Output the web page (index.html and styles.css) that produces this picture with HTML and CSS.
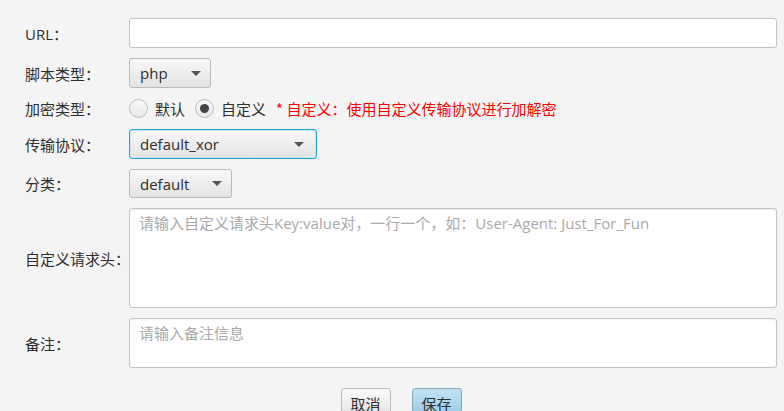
FILE: index.html
```html
<!DOCTYPE html>
<html lang="zh">
<head>
<meta charset="utf-8">
<link rel="stylesheet" href="styles.css">
</head>
<body>
<div class="form">
  <label class="lbl">URL：</label>
  <div class="ctl"><div class="input"></div></div>

  <label class="lbl">脚本类型：</label>
  <div class="ctl"><div class="select w-php"><span>php</span><i class="arrow"></i></div></div>

  <label class="lbl">加密类型：</label>
  <div class="ctl radios">
    <span class="radio"></span><span class="rtext">默认</span>
    <span class="radio on"></span><span class="rtext">自定义</span>
    <span class="hint">* 自定义：使用自定义传输协议进行加解密</span>
  </div>

  <label class="lbl">传输协议：</label>
  <div class="ctl"><div class="select focus w-proto"><span>default_xor</span><i class="arrow"></i></div></div>

  <label class="lbl">分类：</label>
  <div class="ctl"><div class="select w-cat"><span>default</span><i class="arrow"></i></div></div>

  <label class="lbl">自定义请求头：</label>
  <div class="ctl"><div class="area tall"><span class="ph">请输入自定义请求头Key:value对，一行一个，如：User-Agent: Just_For_Fun</span></div></div>

  <label class="lbl">备注：</label>
  <div class="ctl"><div class="area short"><span class="ph">请输入备注信息</span></div></div>
</div>
<div class="buttons">
  <div class="btn">取消</div>
  <div class="btn primary">保存</div>
</div>
</body>
</html>
```
FILE: styles.css
```css
html, body {
  margin: 0;
  padding: 0;
  background: #f4f4f4;
  font-family: "Open Sans", "Noto Sans CJK SC", sans-serif;
  font-size: 15px;
  color: #333;
  overflow: hidden;
}

.form {
  display: grid;
  grid-template-columns: 104px 648px;
  row-gap: 10px;
  padding: 18px 0 0 25px;
}

.lbl {
  display: flex;
  align-items: center;
  font-family: "Open Sans", "Noto Sans CJK SC", sans-serif;
  font-size: 15px;
  color: #2e2e2e;
  white-space: nowrap;
}

.ctl {
  display: flex;
  align-items: center;
}

.input {
  box-sizing: border-box;
  width: 648px;
  height: 30px;
  background: #fff;
  border: 1px solid #c3c3c3;
  border-radius: 3px;
}

.select {
  box-sizing: border-box;
  height: 30px;
  display: flex;
  align-items: center;
  justify-content: space-between;
  padding: 0 9px 0 10px;
  border: 1px solid #b9b9b9;
  border-radius: 3px;
  background: linear-gradient(#f8f8f8, #e3e3e3);
  font-family: "Open Sans", sans-serif;
  font-size: 15px;
  color: #2e2e2e;
}
.select.focus {
  border-color: #1fa3d8;
  box-shadow: inset 0 0 0 1px #c9e6f3;
  padding-right: 12px;
}
.w-php { width: 82px; }
.w-proto { width: 188px; }
.w-cat { width: 103px; height: 29px; }

.arrow {
  width: 0;
  height: 0;
  border-left: 5px solid transparent;
  border-right: 5px solid transparent;
  border-top: 5px solid #555;
}

.radios {
  height: 20px;
  font-family: "Noto Sans CJK SC", sans-serif;
  color: #2e2e2e;
}
.radio {
  box-sizing: border-box;
  width: 19px;
  height: 19px;
  border-radius: 50%;
  border: 1px solid #bcbcbc;
  background: linear-gradient(#fafafa, #e6e6e6);
  display: flex;
  align-items: center;
  justify-content: center;
}
.radio.on::after {
  content: "";
  width: 9px;
  height: 9px;
  border-radius: 50%;
  background: #444;
}
.rtext {
  margin-left: 7px;
  margin-right: 10px;
}
.hint {
  color: #ff0000;
  margin-left: 0;
}

.area {
  box-sizing: border-box;
  width: 648px;
  background: #fff;
  border: 1px solid #c3c3c3;
  border-radius: 3px;
  padding: 3px 9px;
  box-shadow: inset 0 1px 2px rgba(0,0,0,0.06);
}
.area.tall { height: 100px; }
.area.short { height: 50px; }
.ph {
  color: #a9a9a9;
  font-family: "Open Sans", "Noto Sans CJK SC", sans-serif;
  font-size: 15px;
}

.buttons {
  display: flex;
  justify-content: center;
  gap: 21px;
  padding: 20px 0 0 18px;
}
.btn {
  box-sizing: border-box;
  width: 50px;
  height: 28px;
  display: flex;
  align-items: center;
  justify-content: center;
  padding-top: 3px;
  border: 1px solid #b9b9b9;
  border-radius: 3px;
  background: linear-gradient(#fafafa, #e3e3e3);
  font-family: "Noto Sans CJK SC", sans-serif;
  font-size: 15px;
  color: #2e2e2e;
}
.btn.primary {
  border-color: #85a9c1;
  background: linear-gradient(#c2e2f3, #99cbe6);
}
```
